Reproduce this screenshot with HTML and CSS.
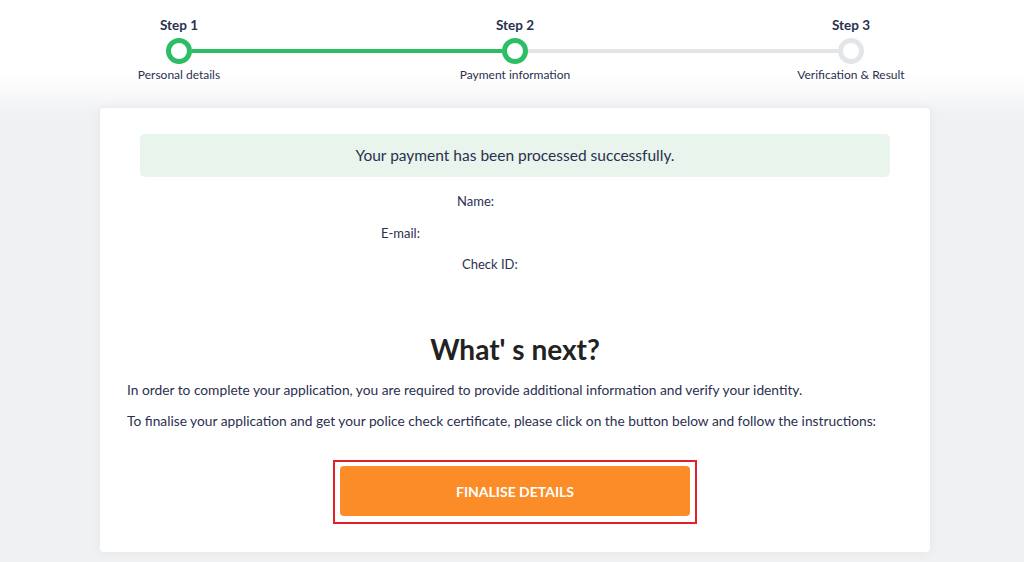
FILE: index.html
```html
<!DOCTYPE html>
<html>

<head>
    <meta charset="UTF-8">
    <link rel="stylesheet" href="styles.css">
    <title>Payment information</title>
</head>

<body>
    <div class="page">
        <div class="stepper">
            <div class="step-row">
                <div class="step-title">Step 1</div>
                <div class="step-title">Step 2</div>
                <div class="step-title">Step 3</div>
            </div>
            <div class="track">
                <span class="dot done"></span>
                <span class="bar done"></span>
                <span class="dot done"></span>
                <span class="bar"></span>
                <span class="dot"></span>
            </div>
            <div class="step-row labels">
                <div class="step-label">Personal details</div>
                <div class="step-label">Payment information</div>
                <div class="step-label">Verification &amp; Result</div>
            </div>
        </div>

        <div class="card">
            <div class="alert-success">Your payment has been processed successfully.</div>

            <div class="summary">
                <div class="summary-row row-name">Name:</div>
                <div class="summary-row row-email">E-mail:</div>
                <div class="summary-row row-check">Check ID:</div>
            </div>

            <h2>What' s next?</h2>
            <p>In order to complete your application, you are required to provide additional information and verify your identity.</p>
            <p>To finalise your application and get your police check certificate, please click on the button below and follow the instructions:</p>

            <div class="button-wrap">
                <div class="highlight">
                    <button class="finalise-button">FINALISE DETAILS</button>
                </div>
            </div>
        </div>
    </div>
</body>

</html>
```

FILE: styles.css
```css
html, body {
    margin: 0;
    padding: 0;
}

body {
    font-family: Lato, "Noto Sans", Arial, sans-serif;
    color: #2b3050;
    background: linear-gradient(#ffffff 0, #ffffff 75px, #f0f1f3 115px) no-repeat;
    background-color: #f0f1f3;
    min-height: 562px;
}

.page {
    width: 832px;
    margin-left: 99px;
    padding-top: 16px;
}

.step-row {
    display: flex;
    justify-content: space-between;
}

.step-title,
.step-label {
    width: 160px;
    text-align: center;
}

.step-title {
    font-size: 13.5px;
    font-weight: bold;
    line-height: 18px;
}

.step-label {
    font-size: 12px;
    line-height: 16px;
}

.labels {
    margin-top: 3px;
}

.track {
    display: flex;
    align-items: center;
    padding: 0 67px;
    height: 26px;
    margin: 4px 0 0;
}

.dot {
    width: 16px;
    height: 16px;
    border: 5px solid #e3e6e9;
    border-radius: 50%;
    background-color: white;
    flex: none;
}

.dot.done {
    border-color: #2dbd63;
}

.bar {
    flex: 1;
    height: 4px;
    background-color: #e3e6e9;
}

.bar.done {
    background-color: #2dbd63;
}

.card {
    margin-top: 25px;
    margin-left: 1px;
    width: 830px;
    height: 444px;
    box-sizing: border-box;
    padding: 26px 27px 0;
    background-color: white;
    border-radius: 4px;
    box-shadow: 0 0 12px rgba(0, 0, 0, 0.05);
}

.alert-success {
    margin: 0 13px;
    height: 43px;
    line-height: 43px;
    text-align: center;
    font-size: 15.5px;
    background-color: #e8f4ec;
    border-radius: 5px;
}

.summary {
    margin-top: 15px;
    font-size: 13px;
}

.summary-row {
    line-height: 18px;
    margin-bottom: 13.5px;
}

.row-name {
    padding-left: 330px;
}

.row-email {
    padding-left: 254px;
}

.row-check {
    padding-left: 335px;
}

h2 {
    margin: 59px 0 15px;
    font-size: 28px;
    line-height: 34px;
    text-align: center;
    color: #222;
}

p {
    margin: 0 0 13px;
    font-size: 13.75px;
    line-height: 18px;
}

.button-wrap {
    display: flex;
    justify-content: center;
    margin-top: 30px;
}

.highlight {
    border: 2px solid #e3202a;
    padding: 4px 5px 6px;
}

.finalise-button {
    display: block;
    width: 350px;
    height: 50px;
    border: none;
    border-radius: 4px;
    background-color: #fb8c27;
    color: white;
    font-family: Lato, "Noto Sans", Arial, sans-serif;
    font-size: 14px;
    font-weight: bold;
    cursor: pointer;
}
```
